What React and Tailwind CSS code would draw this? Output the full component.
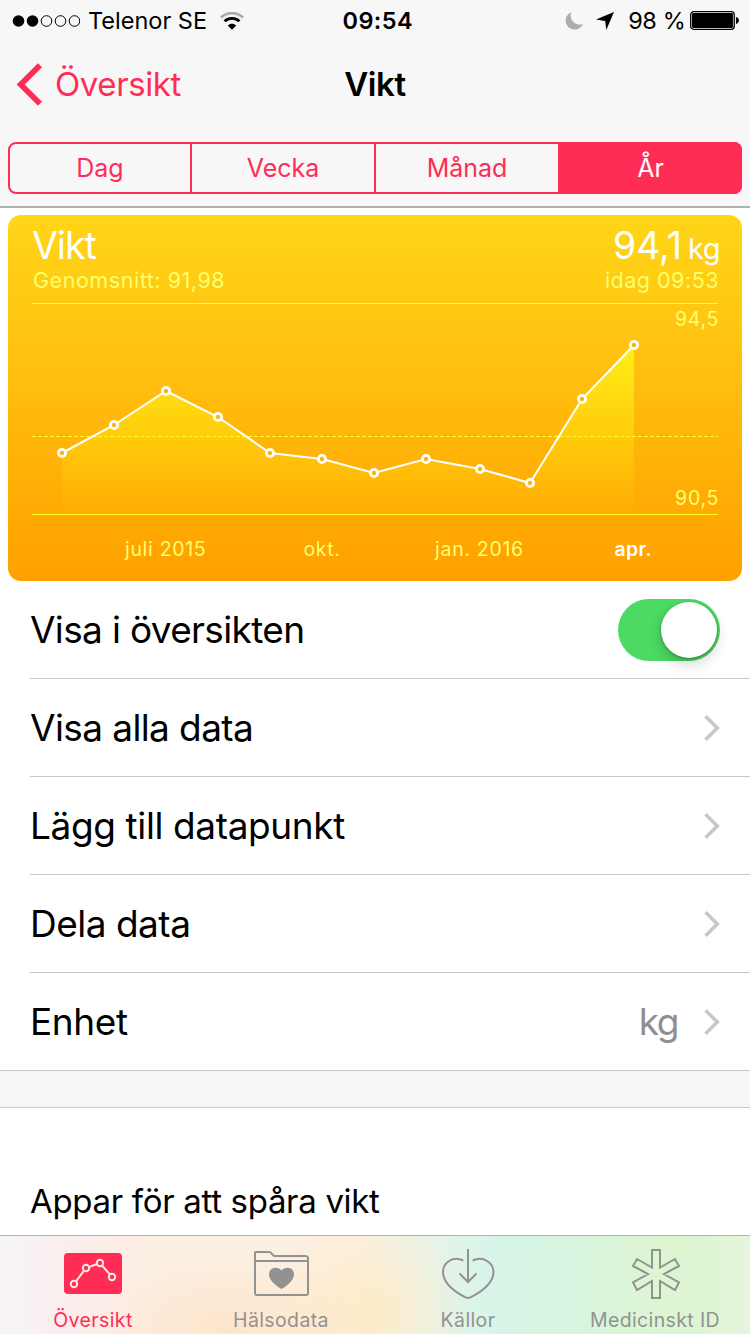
import React from 'react';

const points = [
  [62, 453], [114, 425], [166, 391], [218, 417], [270, 453], [322, 459],
  [374, 473], [426, 459], [480, 469], [530, 483], [582, 399], [634, 345],
];

function StatusBar() {
  return (
    <div className="flex h-10 items-center pl-3 pr-[10px] pt-px text-[23.5px] leading-10">
      <div className="flex w-[331px] items-center">
        <svg width="68" height="12" viewBox="0 0 68 12">
          <circle cx="6.5" cy="6" r="5.8" />
          <circle cx="20.5" cy="6" r="5.8" />
          <g fill="none" stroke="#000" strokeWidth="1">
            <circle cx="34.5" cy="6" r="5.3" />
            <circle cx="48.5" cy="6" r="5.3" />
            <circle cx="62.5" cy="6" r="5.3" />
          </g>
        </svg>
        <span className="ml-2 w-[132px] whitespace-nowrap pt-px">Telenor SE</span>
        <svg width="24" height="18" viewBox="0 0 24 18" fill="none">
          <path d="M1 5.6C7 -0.3 17 -0.3 23 5.6" stroke="#adadad" strokeWidth="2.6" />
          <path d="M4.6 9.3C8.8 5.4 15.2 5.4 19.4 9.3" stroke="#000" strokeWidth="2.9" />
          <path d="M7.8 13.4C10.2 11.2 13.8 11.2 16.2 13.4L12 17.8Z" fill="#000" />
        </svg>
      </div>
      <span className="w-[223px] pt-px font-semibold tracking-[0.4px]">09:54</span>
      <svg width="18" height="18" viewBox="0 0 18 18">
        <path d="M6.2 0.3A9 9 0 1 0 18 12A9.2 9.2 0 0 1 6.2 0.3Z" fill="#adadad" />
      </svg>
      <svg className="ml-[13px]" width="18" height="18" viewBox="0 0 18 18">
        <path d="M18 0L10.3 18L9.2 8.9L0 7.6Z" />
      </svg>
      <span className="ml-[14px] w-[62px] whitespace-nowrap pt-px tracking-[-0.4px]">98 %</span>
      <svg width="50" height="19" viewBox="0 0 50 19">
        <rect x="0.7" y="0.7" width="43.6" height="17.6" rx="3" fill="none" stroke="#000" strokeWidth="1.3" />
        <rect x="2" y="2" width="41" height="15" rx="1.5" />
        <path d="M46 6C50 7 50 12 46 13Z" />
      </svg>
    </div>
  );
}

function NavBar() {
  return (
    <div className="grid h-[88px] grid-cols-[1fr_auto_1fr] items-center text-[33px]">
      <div className="flex items-center pl-4 text-[#ff2d55]">
        <svg width="26" height="43" viewBox="0 0 26 43" fill="none" stroke="currentColor" strokeWidth="5.8">
          <path d="M24 2.2L4.7 21.5L24 40.8" />
        </svg>
        <span className="ml-[13px] pt-0.5 tracking-[-0.4px]">Översikt</span>
      </div>
      <span className="pt-0.5 font-semibold tracking-[-0.4px]">Vikt</span>
      <span />
    </div>
  );
}

function Segments() {
  return (
    <div className="mx-2 mt-[14px] grid h-[52px] grid-cols-[182px_184px_182px_1fr] rounded-[8px] border-2 border-[#ff2d55] text-center text-[25px] leading-[48px] text-[#ff2d55]">
      <span className="border-r-2 border-[#ff2d55]">Dag</span>
      <span className="border-r-2 border-[#ff2d55]">Vecka</span>
      <span>Månad</span>
      <span className="-my-0.5 -mr-0.5 rounded-r-[8px] bg-[#ff2d55] pl-px pt-0.5 text-white">År</span>
    </div>
  );
}

function WeightCard() {
  const line = points.map((p) => p.join(' ')).join(' L');
  return (
    <div className="mx-2 mt-[7px] h-[366px] rounded-[13px] bg-linear-to-b from-[#ffd618] to-[#ffa000] px-6 text-[#ffff6e]">
      <div className="flex h-[52px] items-start justify-between pt-px text-[37.5px] leading-[60px] text-white">
        <span className="tracking-[-1px]">Vikt</span>
        <span className="-mr-[2px] flex items-baseline">
          94,1<span className="ml-[6px] text-[29px] leading-none tracking-[-0.5px]">kg</span>
        </span>
      </div>
      <div className="flex h-9 items-start justify-between text-[21.5px] leading-[27px]">
        <span className="ml-px tracking-[0.55px]">Genomsnitt: 91,98</span>
        <span className="-mr-px tracking-[0.5px]">idag 09:53</span>
      </div>
      <svg className="block" width="686" height="270" viewBox="32 303 686 270">
        <defs>
          <linearGradient id="area" gradientUnits="userSpaceOnUse" x1="0" y1="345" x2="0" y2="515">
            <stop offset="0" stopColor="#fff01a" stopOpacity="0.95" />
            <stop offset="0.5" stopColor="#ffe60e" stopOpacity="0.5" />
            <stop offset="1" stopColor="#ffd800" stopOpacity="0.02" />
          </linearGradient>
        </defs>
        <path d="M32 303.5H718M32 514.5H718" stroke="#ffff1e" strokeWidth="1" />
        <path d={`M62 515 L${line} L634 515Z`} fill="url(#area)" />
        <path d="M32 436.5H718" stroke="#ffff1e" strokeDasharray="4 2" />
        <path d={`M${line}`} fill="none" stroke="#fff" strokeWidth="2" />
        {points.map(([x, y]) => (
          <circle key={x} cx={x} cy={y} r="3.6" fill="#ffb40d" stroke="#fff" strokeWidth="2.8" />
        ))}
        <g fill="#ffff6e" className="text-[19.5px] tracking-[0.7px]">
          <text x="719" y="326" textAnchor="end">94,5</text>
          <text x="719" y="505" textAnchor="end">90,5</text>
          <text x="165.7" y="556" textAnchor="middle">juli 2015</text>
          <text x="322" y="556" textAnchor="middle">okt.</text>
          <text x="479.5" y="556" textAnchor="middle">jan. 2016</text>
          <text x="633.3" y="556" textAnchor="middle" fill="#fff" className="font-semibold tracking-[0.4px]">apr.</text>
        </g>
      </svg>
    </div>
  );
}

function Row({ label, children, last, tracking = 'tracking-[-0.6px]' }) {
  return (
    <div className={last ? 'border-b border-[#c8c7cc] pl-[30px]' : 'pl-[30px]'}>
      <div className={`flex items-center justify-between pr-[30px] text-[37px] ${last ? 'h-[97px]' : 'h-[98px] border-b border-[#c8c7cc]'}`}>
        <span className={tracking}>{label}</span>
        {children}
      </div>
    </div>
  );
}

function Chevron() {
  return (
    <svg width="16" height="26" viewBox="0 0 16 26" fill="none" stroke="#c7c7cc" strokeWidth="3.6">
      <path d="M1.5 1.3L13.3 13L1.5 24.7" />
    </svg>
  );
}

function Tab({ label, active, children }) {
  return (
    <div className={`flex flex-col items-center ${active ? 'text-[#ff2d55]' : 'text-[#929292]'}`}>
      <svg className="mt-[11px]" width="60" height="54" viewBox="0 0 60 54" fill="none" stroke="currentColor" strokeWidth="2">
        {children}
      </svg>
      <span className="mt-[5px] whitespace-nowrap text-[19.5px] leading-7 tracking-[0.38px]">{label}</span>
    </div>
  );
}

export default function App() {
  return (
    <div className="flex h-[1334px] w-[750px] flex-col overflow-hidden bg-white font-['Inter',sans-serif] text-black">
      <header className="h-[208px] shrink-0 border-b-2 border-[#b2b2b2] bg-[#f7f7f7]">
        <StatusBar />
        <NavBar />
        <Segments />
      </header>
      <main className="h-[1027px] shrink-0">
        <WeightCard />
        <Row label="Visa i översikten" tracking="tracking-[-0.66px]">
          <span className="flex h-[62px] w-[102px] items-center justify-end rounded-full bg-[#4cd964] pr-[3px]">
            <span className="size-14 rounded-full bg-white shadow-[0_6px_14px_rgba(0,0,0,0.18),0_1px_3px_rgba(0,0,0,0.3)]" />
          </span>
        </Row>
        <Row label="Visa alla data"><Chevron /></Row>
        <Row label="Lägg till datapunkt" tracking="tracking-[-0.38px]"><Chevron /></Row>
        <Row label="Dela data" tracking="tracking-[-0.5px]"><Chevron /></Row>
        <Row label="Enhet" tracking="tracking-[-0.4px]" last>
          <span className="flex items-center gap-[26px] tracking-[-1.4px] text-[#8e8e93]">kg<Chevron /></span>
        </Row>
        <div className="h-[37px] border-b border-[#c8c7cc] bg-[#f7f7f7]" />
        <h2 className="pl-[30px] pt-[71px] text-[33px] leading-[44px] tracking-[-0.32px]">Appar för att spåra vikt</h2>
      </main>
      <nav className="grid h-[99px] shrink-0 grid-cols-[186px_190px_184px_190px] border-t border-[#b2b2b2] bg-[radial-gradient(ellipse_130px_70px_at_230px_90px,#ffe1c0b0_0%,#ffe1c050_55%,#ffe1c000_100%),radial-gradient(ellipse_100px_100px_at_365px_75px,#ffeac2e0_0%,#ffeac270_50%,#ffeac200_100%),linear-gradient(90deg,#f6f4f8_0%,#fbedec_10%,#fbeee2_20%,#fbf0e3_47%,#e9f3e8_57%,#d6f5e8_66%,#d8f5df_77%,#ddf5d1_88%,#def5d3_94%,#e6f5df_100%)]">
        <Tab label="Översikt" active>
          <g transform="translate(0.5)">
            <rect x="0.5" y="6" width="58" height="41" rx="4" fill="currentColor" stroke="none" />
            <path d="M10.5 37L22.5 21L36.5 16L48.5 30" stroke="#fbece4" />
            <g fill="#ff2d55" stroke="#fbece4">
              <circle cx="10.5" cy="37" r="3.2" /><circle cx="22.5" cy="21" r="3.2" />
              <circle cx="36.5" cy="16" r="3.2" /><circle cx="48.5" cy="30" r="3.2" />
            </g>
          </g>
        </Tab>
        <Tab label="Hälsodata">
          <path d="M5 5H18Q20 5 21 7L23 9H54Q57 9 57 11V46Q57 48 55 48H6Q4 48 4 46V6Q4 5 5 5ZM4 14H57" />
          <path d="M30.5 42C25 39 18 33 18 27.5C18 20 27 19 30.5 23.5C34 19 43 20 43 27.5C43 33 36 39 30.5 42Z" fill="currentColor" stroke="none" />
        </Tab>
        <Tab label="Källor">
          <path transform="translate(0.5)" d="M24.8 13.5C14 8.5 4.5 16 4.5 25C4.5 36 16 45 27 50.3Q29.5 51.5 32 50.3C43 45 55 36 55 25C55 16 45 8.5 34.2 13.5M29.5 2V35M21 26.5L29.5 35L38 26.5" />
        </Tab>
        <Tab label="Medicinskt ID">
          <path transform="translate(1)" d="M26 3H34V20.5L49 12L53 19L38 27L53 35.5L49 43L34 34V51H26V34L11 43L7 35.5L22 27L7 19L11 12L26 20.5Z" />
        </Tab>
      </nav>
    </div>
  );
}
